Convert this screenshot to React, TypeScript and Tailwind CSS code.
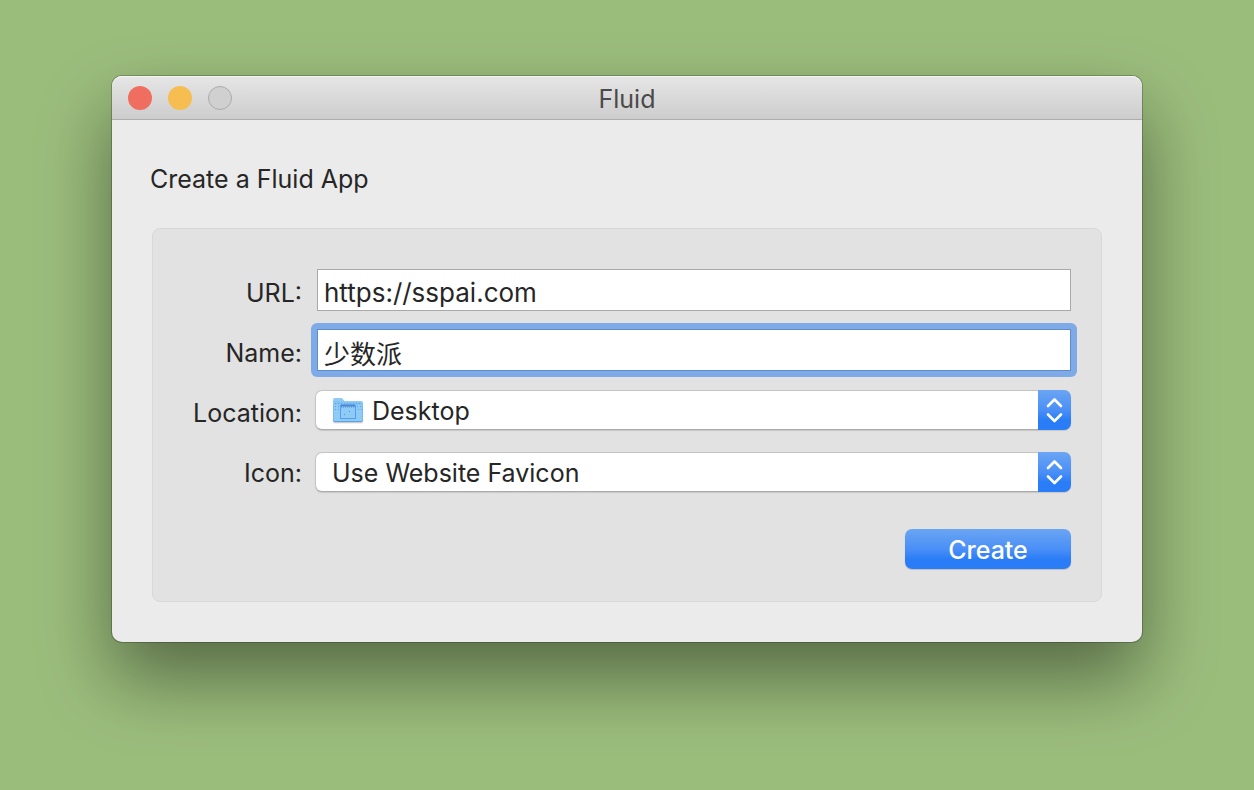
import type { ReactNode } from "react";

const rowLabel = "w-[150px] shrink-0 pr-px text-right leading-8";
const textInput =
  "block h-[42px] w-full border bg-white px-[6px] pt-1 text-[26px] leading-8 text-[#262626] outline-none";

function FolderIcon() {
  return (
    <svg
      className="pointer-events-none absolute left-[17px] top-[7px]"
      width="32"
      height="27"
      viewBox="0 0 32 27"
      fill="none"
      aria-hidden="true"
    >
      <path d="M1.500 25.500h29" stroke="#c9cdd2" strokeWidth="1.600" />
      <path d="M1 3Q1 1 3 1h6q1 0 1.700.8L12.500 4H29q2 0 2 2v17.500q0 1.500-1.500 1.500h-27Q1 25 1 23.500z" fill="#8ecbf6" />
      <path d="M1.500 8V4h9.500l1.500 1H29q1.500 0 1.500 1.500V8z" fill="#84c2f3" />
      <path d="M1.200 23.500q.3 1 1.300 1h27q1 0 1.300-1" stroke="#5fa0e8" strokeWidth="1" />
      <path d="M1.500 8v15.500M30.500 8v15.500" stroke="#79b9f1" strokeWidth="1" />
      <path d="M3 6.500h27M3 9.500h5M25 9.500h5M3 12.500h4M26 12.500h4" stroke="#5f9fe9" strokeWidth="1" strokeDasharray="1 2" />
      <rect x="8.500" y="8.500" width="15" height="13" stroke="#559df0" />
      <path d="M9 8.500h14" stroke="#4a86d2" strokeWidth="2" />
      <path d="M9 10h14" stroke="#4a86d2" strokeWidth="1" strokeDasharray="1 1" />
      <path d="M12 17.500h1M17 14.500h1" stroke="#4f8fe6" />
    </svg>
  );
}

function PopUp({ id, value, icon }: { id: string; value: string; icon?: ReactNode }) {
  return (
    <div className="relative ml-3 flex-1">
      <select
        id={id}
        defaultValue={value}
        className={`block h-10 w-full appearance-none rounded-[7px] border border-[#c4c4c4] border-b-[#ababab] bg-white pr-10 pt-0.5 leading-8 text-[#262626] shadow-[0_1px_1px_rgba(0,0,0,0.12)] outline-none ${
          icon ? "pl-14" : "pl-4"
        }`}
      >
        <option>{value}</option>
      </select>
      {icon}
      <span className="pointer-events-none absolute inset-y-0 right-0 flex w-[33px] items-center justify-center rounded-r-[7px] bg-linear-to-b from-[#6ba5f3] via-[#4a8ff7] to-[#2a7df6] to-75%">
        <svg width="17" height="26" viewBox="0 0 17 26" fill="none" stroke="#fff" strokeWidth="2.600" strokeLinecap="round" strokeLinejoin="round" aria-hidden="true">
          <path d="M2 9L8.500 2.500 15 9M2 17.500L8.500 24 15 17.500" />
        </svg>
      </span>
    </div>
  );
}

export default function App() {
  return (
    <main className="min-h-screen bg-[#9bbd7c] px-28 py-[76px] font-['Inter','Noto_Sans_CJK_SC',sans-serif] text-[25px] text-[#262626]">
      <div className="rounded-[10px] bg-[#ebebeb] shadow-[0_0_0_1px_rgba(0,0,0,0.22),0_36px_72px_rgba(0,0,0,0.44)]">
        {/* Title bar */}
        <header className="grid h-11 grid-cols-[1fr_auto_1fr] items-center rounded-t-[10px] border-b border-[#adadad] bg-linear-to-b from-[#e6e6e6] to-[#cdcdcd] px-4 shadow-[inset_0_1px_0_#f4f4f4]">
          <div className="flex gap-4">
            <button type="button" aria-label="Close" className="size-6 rounded-full bg-[#f06e5f]" />
            <button type="button" aria-label="Minimize" className="size-6 rounded-full bg-[#f6be50]" />
            <button type="button" aria-label="Zoom" className="size-6 rounded-full border border-[#ababab] bg-[#d0d0d0]" />
          </div>
          <h1 className="pt-0.5 leading-8 text-[#4a4a4a]">Fluid</h1>
        </header>

        <div className="px-10 pb-10 pt-[43px]">
          <h2 className="-ml-0.5 leading-8">Create a Fluid App</h2>

          <form
            onSubmit={(e) => e.preventDefault()}
            className="mt-[33px] rounded-lg border border-[#d8d8d8] bg-[#e2e2e2] pb-8 pr-[30px] pt-10"
          >
            <div className="flex items-center">
              <label htmlFor="url" className={`${rowLabel} pt-1.5`}>URL:</label>
              <div className="ml-[14px] flex-1">
                <input id="url" type="text" defaultValue="https://sspai.com" className={`${textInput} border-[#a9a9a9]`} />
              </div>
            </div>

            <div className="mt-[18px] flex items-center">
              <label htmlFor="name" className={`${rowLabel} pt-1.5`}>Name:</label>
              {/* Focused field */}
              <div className="ml-[14px] flex-1 rounded-[2px] bg-[#7faae8] shadow-[0_0_0_6px_#7faae8]">
                <input id="name" type="text" defaultValue="少数派" className={`${textInput} border-[#5f8ccb]`} />
              </div>
            </div>

            <div className="mt-[19px] flex items-center">
              <label htmlFor="location" className={`${rowLabel} pt-1.5`}>Location:</label>
              <PopUp id="location" value="Desktop" icon={<FolderIcon />} />
            </div>

            <div className="mt-[22px] flex items-center">
              <label htmlFor="icon" className={`${rowLabel} pt-0.5`}>Icon:</label>
              <PopUp id="icon" value="Use Website Favicon" />
            </div>

            <div className="mt-[37px] flex justify-end">
              <button
                type="submit"
                className="h-10 w-[166px] rounded-[7px] bg-linear-to-b from-[#6ba5f3] via-[#4a8ff7] to-[#2a7df6] to-75% pt-0.5 font-medium leading-8 text-white shadow-[0_1px_1px_rgba(0,0,0,0.15)]"
              >
                Create
              </button>
            </div>
          </form>
        </div>
      </div>
    </main>
  );
}
